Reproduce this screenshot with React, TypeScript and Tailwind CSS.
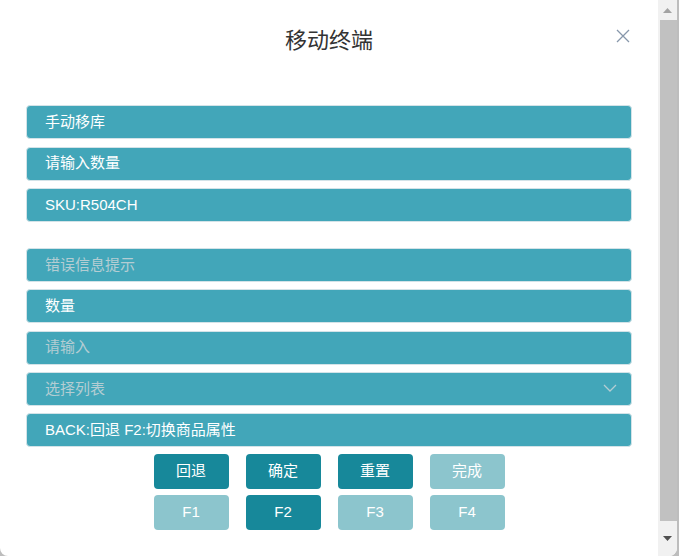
import React from "react";

const font = { fontFamily: '"Liberation Sans", "Noto Sans CJK SC", sans-serif' };

function Row({ text, placeholder, chevron }: { text: string; placeholder?: boolean; chevron?: boolean }) {
  return (
    <div className="flex h-[34px] items-center justify-between rounded-[4px] border border-[#d3e3e8] bg-[#42a6b9] pl-[18px] pr-[14px]">
      <span className={`text-[15px] ${placeholder ? "text-[#b4cdd3]" : "text-white"}`}>{text}</span>
      {chevron && (
        <svg width="14" height="9" viewBox="0 0 14 9" fill="none">
          <path d="M1 1l6 6 6-6" stroke="#b4cdd3" strokeWidth="1.3" />
        </svg>
      )}
    </div>
  );
}

function Btn({ text, dark }: { text: string; dark?: boolean }) {
  return (
    <div
      className={`flex h-[35px] w-[75px] items-center justify-center rounded-[4px] text-[15px] text-white ${
        dark ? "bg-[#17889a]" : "bg-[#8cc5cd]"
      }`}
    >
      {text}
    </div>
  );
}

export default function App() {
  return (
    <div className="h-[556px] w-[679px] overflow-hidden bg-[#bdbdbd]" style={font}>
      <div className="flex h-[556px] w-[677px] overflow-hidden rounded-b-[8px] bg-white">
        <div className="flex w-[658px] flex-col">
          <div className="relative flex h-[80px] items-start justify-center pt-[24px]">
            <span className="text-[22px] text-[#333]">移动终端</span>
            <svg className="absolute left-[616px] top-[29px]" width="14" height="14" viewBox="0 0 14 14" fill="none">
              <path d="M1 1l12 12M13 1L1 13" stroke="#8797ab" strokeWidth="1.3" />
            </svg>
          </div>
          <div className="mt-[25px] flex flex-col px-[26px]">
            <div className="flex flex-col gap-[7.5px]">
              <Row text="手动移库" />
              <Row text="请输入数量" />
              <Row text="SKU:R504CH" />
            </div>
            <div className="mt-[26px] flex flex-col gap-[7.25px]">
              <Row text="错误信息提示" placeholder />
              <Row text="数量" />
              <Row text="请输入" placeholder />
              <Row text="选择列表" placeholder chevron />
              <Row text="BACK:回退 F2:切换商品属性" />
            </div>
            <div className="mt-[7px] flex flex-col items-center gap-[6px]">
              <div className="flex gap-[17px]">
                <Btn text="回退" dark />
                <Btn text="确定" dark />
                <Btn text="重置" dark />
                <Btn text="完成" />
              </div>
              <div className="flex gap-[17px]">
                <Btn text="F1" />
                <Btn text="F2" dark />
                <Btn text="F3" />
                <Btn text="F4" />
              </div>
            </div>
          </div>
        </div>
        <div className="flex w-[19px] flex-col bg-[#f1f1f1]">
          <div className="flex h-[20px] items-center justify-center">
            <svg width="9" height="5" viewBox="0 0 9 5"><path d="M0 5L4.5 0 9 5z" fill="#a3a3a3" /></svg>
          </div>
          <div className="ml-[2px] w-[17px] flex-1 bg-[#c1c1c1]" />
          <div className="flex h-[35px] items-center justify-center">
            <svg width="9" height="5" viewBox="0 0 9 5"><path d="M0 0L4.5 5 9 0z" fill="#505050" /></svg>
          </div>
        </div>
      </div>
    </div>
  );
}
